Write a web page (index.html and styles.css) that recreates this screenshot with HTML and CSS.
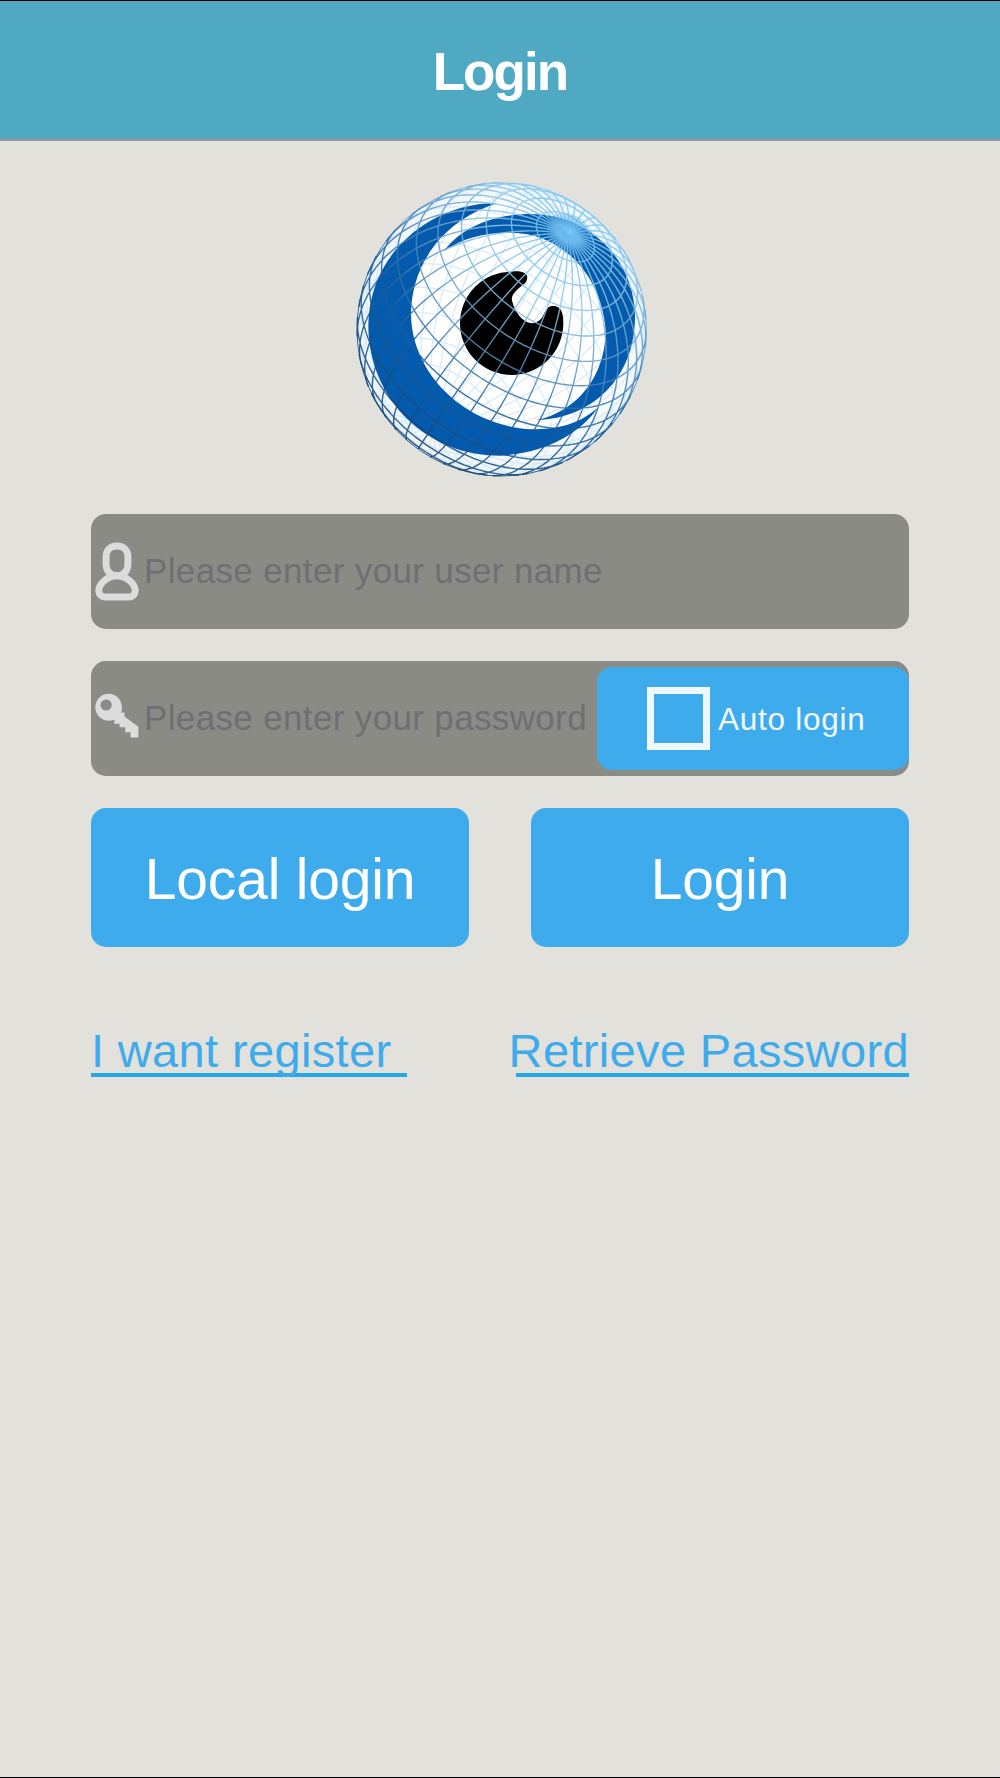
FILE: index.html
```html
<!DOCTYPE html>
<html lang="en">
<head>
<meta charset="UTF-8" />
<meta name="viewport" content="width=device-width, initial-scale=1" />
<title>Login</title>
<link rel="stylesheet" href="styles.css">
</head>
<body>
<header class="navbar">
  <h1>Login</h1>
</header>
<main>
  <svg class="logo" viewBox="48 36 873 885" aria-label="Logo">
    <defs>
      <radialGradient id="wire" gradientUnits="userSpaceOnUse" cx="685" cy="190" r="800">
        <stop offset="0" stop-color="#78c6f2" />
        <stop offset="0.3" stop-color="#8cc5e6" />
        <stop offset="0.55" stop-color="#5590bd" />
        <stop offset="0.72" stop-color="#1a5c9e" />
        <stop offset="1" stop-color="#123d68" />
      </radialGradient>
      <radialGradient id="glow" gradientUnits="userSpaceOnUse" cx="685" cy="190" r="80">
        <stop offset="0" stop-color="#78caf7" />
        <stop offset="0.3" stop-color="#6cbcf0" stop-opacity="0.8" />
        <stop offset="1" stop-color="#5aaae4" stop-opacity="0" />
      </radialGradient>
      <radialGradient id="ball" gradientUnits="userSpaceOnUse" cx="485" cy="478" r="440">
        <stop offset="0.8" stop-color="#ffffff" />
        <stop offset="1" stop-color="#e9f4fb" />
      </radialGradient>
    </defs>
    <ellipse cx="485" cy="478" rx="435" ry="441" fill="url(#ball)" />
    <path id="backLines" class="back-lines" />
    <g fill="#045bad">
      <path d="M470 100C300 95 85 230 85 470C88 690 260 857 480 857C620 850 720 790 775 712C715 765 650 778 575 778C360 765 213 600 213 430C215 300 290 160 470 100Z" />
      <path d="M312 243C370 165 470 132 575 132C760 135 885 280 885 440C885 620 760 745 590 750C710 725 797 620 797 480C785 320 670 188 510 188C430 188 365 205 312 243Z" />
    </g>
    <path d="M548 307C565 310 565 328 555 340C530 360 510 375 517 395C525 425 545 455 575 460C620 455 605 415 635 408C665 405 670 430 670 460A155 155 0 1 1 515 305C530 303 540 304 548 307Z" />
    <path id="frontLines" class="front-lines" />
    <ellipse cx="690" cy="192" rx="76" ry="56" transform="rotate(35 690 192)" fill="url(#glow)" />
    <ellipse cx="485" cy="478" rx="434" ry="440" fill="none" stroke="url(#wire)" stroke-width="2.5" />
  </svg>

  <form class="login-form">
    <div class="field">
      <svg class="icon-user" viewBox="46 124 132 178">
        <g fill="none" stroke="#dcdcdc" stroke-width="21">
          <path d="M111.500 136C90 136 79 150 79 169V190C79 212 93 226 111.500 226S145 212 145 190V169C145 150 133 136 111.500 136Z" />
          <path d="M111.500 226C84 226 57 250 57 271C57 282 65 290 77 290H147C159 290 167 282 167 271C167 250 140 226 111.500 226Z" />
        </g>
      </svg>
      <input type="text" placeholder="Please enter your user name">
    </div>
    <div class="field">
      <svg class="icon-key" viewBox="45 578 134 136">
        <path fill="#dcdcdc" fill-rule="evenodd" d="M86 580C109 580 127 599 127 621C127 628 127 633 124 637H135V649L177 680V713H153V697H137V682H120V671H104V659C98 661 92 662 86 662C64 662 46 643 46 621S64 580 86 580ZM79 597A17 17 0 1 0 79 631A17 17 0 1 0 79 597Z" />
      </svg>
      <input type="password" placeholder="Please enter your password">
      <label class="auto-login">
        <span class="box"></span>
        <span class="label">Auto login</span>
      </label>
    </div>
    <div class="buttons">
      <button type="button">Local login</button>
      <button type="button">Login</button>
    </div>
  </form>

  <nav class="links">
    <a class="register" href="#">I want register</a>
    <a class="retrieve" href="#"><span>Retrieve Password</span></a>
  </nav>
</main>
<script>
  (function () {
    // wireframe of the globe: meridians and parallels around a tilted pole
    const cx = 485, cy = 478, rx = 434, ry = 440;
    const pole = [0.452, 0.648, 0.613];
    const rad = Math.PI / 180;

    function cross(a, b) {
      return [
        a[1] * b[2] - a[2] * b[1],
        a[2] * b[0] - a[0] * b[2],
        a[0] * b[1] - a[1] * b[0]
      ];
    }

    function dot(a, b) {
      return a[0] * b[0] + a[1] * b[1] + a[2] * b[2];
    }

    const len = Math.hypot(pole[0], pole[1]);
    const u = [-pole[1] / len, pole[0] / len, 0];
    const v = cross(pole, u);
    const start = [-0.016, -0.007, 1];
    const offset = Math.atan2(dot(start, v), dot(start, u)) / rad;

    let front = '';
    let back = '';

    function drawCurve(from, to, pointAt) {
      let last = null;
      for (let t = from; t <= to; t += 2) {
        const p = pointAt(t);
        const side = p[2] >= 0;
        const xy = (cx + p[0] * rx).toFixed(1) + ' ' + (cy - p[1] * ry).toFixed(1);
        const cmd = (side === last ? 'L' : 'M') + xy;
        if (side) front += cmd;
        else back += cmd;
        last = side;
      }
    }

    function sphere(colat, lon) {
      const s = Math.sin(colat * rad), c = Math.cos(colat * rad);
      const a = Math.cos(lon * rad), b = Math.sin(lon * rad);
      return [0, 1, 2].map(i => c * pole[i] + s * (a * u[i] + b * v[i]));
    }

    for (let lon = 0; lon < 360; lon += 9) {
      drawCurve(2, 178, t => sphere(t, lon + offset));
    }
    for (let colat = 13; colat < 175; colat += 10) {
      drawCurve(0, 360, t => sphere(colat, t));
    }

    document.getElementById('frontLines').setAttribute('d', front);
    document.getElementById('backLines').setAttribute('d', back);
  })();
</script>
</body>
</html>
```
FILE: styles.css
```css
* {
  box-sizing: border-box;
  margin: 0;
  padding: 0;
  font-family: 'Liberation Sans', Arial, Helvetica, sans-serif;
}
body {
  background: #e2e1dc;
  min-height: 1778px;
  border-top: 1px solid #000;
  border-bottom: 1px solid #000;
}
.navbar {
  height: 140px;
  background: #50a9c3;
  border-bottom: 2px solid #999795;
  text-align: center;
}
.navbar h1 {
  color: #fff;
  font-size: 53px;
  line-height: 141px;
  letter-spacing: -1.9px;
}
main {
  padding: 41px 91px 0;
}
.logo {
  display: block;
  width: 291px;
  height: 295px;
  margin: 0 auto 37px 265px;
}
.front-lines {
  fill: none;
  stroke: url(#wire);
  stroke-width: 4.2;
  opacity: 0.85;
}
.back-lines {
  fill: none;
  stroke: #cfe6f3;
  stroke-width: 4;
  opacity: 0.75;
}
.field {
  display: flex;
  align-items: center;
  height: 115px;
  margin-bottom: 32px;
  padding-left: 4px;
  background: #8a8b85;
  border-radius: 15px;
}
.icon-user {
  flex: none;
  width: 44px;
  height: 59px;
}
.icon-key {
  flex: none;
  width: 44px;
  height: 45px;
  margin-bottom: 6px;
}
.field input {
  flex: 1;
  min-width: 0;
  height: 100%;
  padding-left: 5px;
  padding-bottom: 2px;
  background: none;
  border: none;
  outline: none;
  font-size: 35px;
  letter-spacing: 0.35px;
}
.field input::placeholder {
  color: #6f6f73;
  opacity: 1;
}
.auto-login {
  display: flex;
  align-items: center;
  flex: none;
  width: 312px;
  height: 103px;
  padding-left: 50px;
  gap: 8px;
  background: #3eabec;
  border-radius: 15px;
  color: #f1f9ff;
  font-size: 31.5px;
  letter-spacing: 0.75px;
}
.auto-login .label {
  padding-top: 2px;
}
.box {
  width: 63px;
  height: 63px;
  border: 7px solid #f0f8ff;
}
.buttons {
  display: flex;
  justify-content: space-between;
}
.buttons button {
  width: 378px;
  height: 139px;
  padding-top: 3px;
  background: #3eabec;
  border: none;
  border-radius: 15px;
  color: #fff;
  font-size: 57px;
  letter-spacing: -0.2px;
}
.links {
  display: flex;
  justify-content: space-between;
  margin-top: 76px;
}
.links a {
  display: flex;
  height: 54px;
  border-bottom: 4px solid #29a5e9;
  color: #3eabec;
  font-size: 47px;
  line-height: 55px;
  letter-spacing: 0.35px;
  text-decoration: none;
  white-space: nowrap;
}
.register {
  width: 316px;
}
.retrieve {
  width: 393px;
  justify-content: flex-end;
}
```
